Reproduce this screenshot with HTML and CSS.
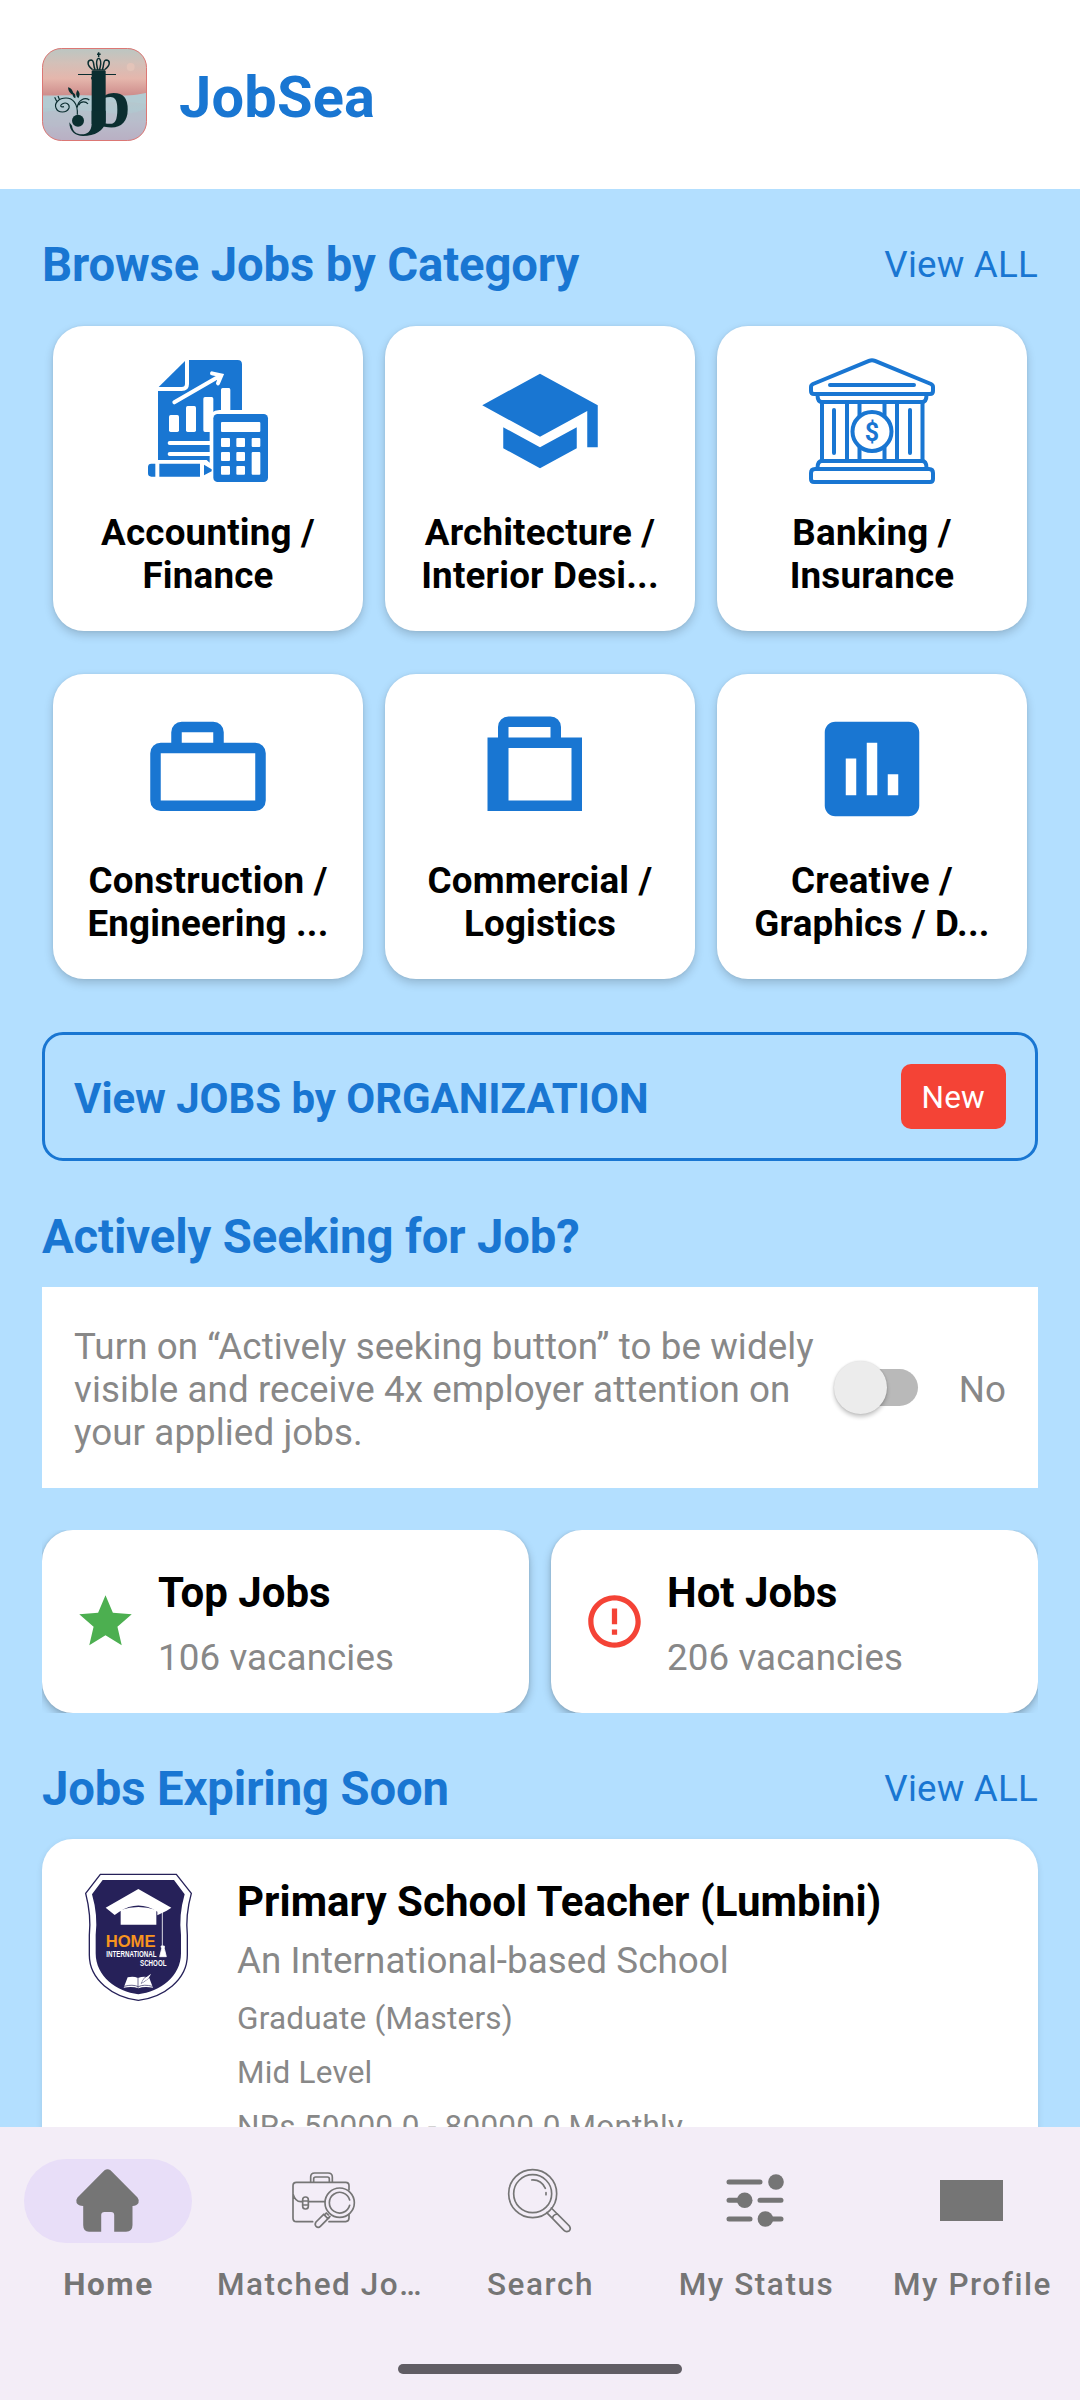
FILE: index.html
```html
<!DOCTYPE html>
<html lang="en">
<head>
<meta charset="utf-8">
<title>JobSea</title>
<link rel="stylesheet" href="styles.css">
</head>
<body>
<header class="header">
  <svg class="logo" viewBox="12 12 315 279">
    <defs>
      <linearGradient id="sky" x1="0" y1="0" x2="0" y2="1">
        <stop offset="0" stop-color="#bac6c2"/><stop offset=".16" stop-color="#d3c0b8"/>
        <stop offset=".33" stop-color="#e5b6ac"/><stop offset=".5" stop-color="#cf8f8d"/>
        <stop offset=".52" stop-color="#b9c6cb"/><stop offset=".66" stop-color="#b1c8d0"/>
        <stop offset=".8" stop-color="#b9bccb"/><stop offset="1" stop-color="#b9afc3"/>
      </linearGradient>
      <clipPath id="tile"><rect x="13" y="13" width="313" height="277" rx="58"/></clipPath>
    </defs>
    <g clip-path="url(#tile)">
      <rect x="12" y="12" width="315" height="279" fill="url(#sky)"/>
      <path d="M12 160Q90 150 170 156T327 146V180Q250 168 180 180T12 192z" fill="#b3cbd2"/>
      <path d="M12 205Q90 190 190 205T327 190V230Q220 220 120 240T12 230z" fill="#b8bcc9" opacity=".6"/>
      <circle cx="278" cy="69" r="12" fill="#e3c4b9"/>
    </g>
    <rect x="13.5" y="13.5" width="312" height="276" rx="57" fill="none" stroke="#dc7774" stroke-width="3"/>
    <rect class="ink" x="161" y="80" width="42" height="160"/>
    <path class="ink" d="M120 90h114v3H120z"/>
    <text class="monogram" transform="translate(157 250)" font-size="218">b</text>
    <path class="ink" d="M161 200V240C160 262 148 271 132 271C115 271 104 262 102 245L94 235C94 262 112 276 135 276C170 276 198 262 203 232V200z"/>
    <circle class="ink" cx="120" cy="230" r="18"/>
    <g class="ink-line">
      <path d="M163 78h38M163 76C145 62 148 48 160 48C170 49 165 66 171 76M201 76C219 62 216 48 204 48C194 49 199 66 193 76M182 42C170 50 177 66 179 76M182 42C194 50 187 66 185 76" stroke-width="4.500"/>
      <path d="M182 25v14M177 31h11" stroke-width="4.500"/>
      <path d="M118 212C120 178 104 162 84 162C62 162 48 178 54 192C60 208 86 208 93 192C96 180 84 174 74 179C64 184 68 191 78 188M118 190C120 168 140 158 154 168M122 184C128 170 144 172 150 180M56 172L50 160M64 166L60 156" stroke-width="3.500"/>
    </g>
    <path class="ink" d="M90 130Q104 132 107 153Q91 149 90 130zM118 138Q130 148 121 163Q110 154 118 138zM103 144Q115 150 112 163Q102 159 103 144z"/>
  </svg>
  <h1 class="brand">JobSea</h1>
</header>

<main class="content">
  <div class="section-head first">
    <h2>Browse Jobs by Category</h2>
    <a class="view-all">View ALL</a>
  </div>

  <section class="categories">
    <article class="category">
      <svg class="cat-icon" viewBox="315 144 378 378">
        <path d="M354 243H425Q447 243 447 222V150H593Q606 150 606 163V300H538Q509 300 509 330V458L500 450H354z"/>
        <path d="M435 153V222Q435 231 425 231H356z"/>
        <g fill="#fff">
          <rect x="387" y="315" width="30" height="51" rx="5"/><rect x="438" y="288" width="30" height="78" rx="5"/>
          <path d="M495 261h20q5 0 5 5V366H495q-5 0-5-5V266q0-5 5-5zM548 234h19q4 0 4 5V301H543V239q0-5 5-5z"/>
        </g>
        <path d="M403 277L538 199M516 190L544 196L534 220M389 399H512M389 432H512" fill="none" stroke="#fff" stroke-width="12" stroke-linecap="round"/>
        <path d="M346 461V500H334Q324 500 324 490V471Q324 461 334 461zM358 461H480V500H358zM492 464L515 478V484L492 496z"/>
        <rect x="520" y="312" width="164" height="204" rx="13"/>
        <g fill="#fff">
          <rect x="543" y="336" width="118" height="30" rx="3"/>
          <rect x="543" y="384" width="27" height="27" rx="3"/><rect x="589" y="384" width="26" height="27" rx="3"/><rect x="635" y="384" width="26" height="27" rx="3"/>
          <rect x="543" y="426" width="27" height="27" rx="3"/><rect x="589" y="426" width="26" height="27" rx="3"/><rect x="635" y="426" width="26" height="68" rx="3"/>
          <rect x="543" y="468" width="27" height="26" rx="3"/><rect x="589" y="468" width="26" height="26" rx="3"/>
        </g>
      </svg>
      <p>Accounting /<br>Finance</p>
    </article>
    <article class="category">
      <svg class="cat-icon" viewBox="0 0 24 24"><path d="M5 13.18v4L12 21l7-3.82v-4L12 17l-7-3.82zM12 3L1 9l11 6 9-4.91V17h2V9L12 3z"/></svg>
      <p>Architecture /<br>Interior Desi...</p>
    </article>
    <article class="category">
      <svg class="cat-icon" viewBox="0 0 126 126">
        <g fill="none" stroke="#1976d2" stroke-width="4" stroke-linejoin="round" stroke-linecap="round">
          <path d="M4 26L60 2.8Q63 1.5 66 2.8L122 26Q124 27 124 29V33Q124 36 121 36H5Q2 36 2 33V29Q2 27 4 26zM21 27H105"/>
          <path d="M8.5 37Q8.500 44 13 44H113Q117.500 44 117.500 37"/>
          <path d="M13 44V103M38 44V103M50.500 44V103M75.500 44V103M88 44V103M113.500 44V103M25 52V95M101 52V95"/>
          <path d="M8.500 110Q8.500 103 13 103H113Q117.500 103 117.500 110M6 111H120Q124 111 124 115V121Q124 124 121 124H5Q2 124 2 121V115Q2 111 6 111z"/>
          <circle cx="63" cy="73.500" r="19.500" fill="#fff"/>
        </g>
        <text class="coin" x="63" y="82.500">$</text>
      </svg>
      <p>Banking /<br>Insurance</p>
    </article>
    <article class="category">
      <svg class="cat-icon" viewBox="0 0 24 24"><path fill-rule="evenodd" d="M5 7V5a2 2 0 0 1 2-2h6a2 2 0 0 1 2 2v2h6a2 2 0 0 1 2 2v9a2 2 0 0 1-2 2H3a2 2 0 0 1-2-2V9a2 2 0 0 1 2-2zM7 7h6V5H7zM3 9v9h18V9z"/></svg>
      <p>Construction /<br>Engineering ...</p>
    </article>
    <article class="category">
      <svg class="cat-icon" viewBox="0 0 24 24"><path fill-rule="evenodd" d="M2 6h2V4a2 2 0 0 1 2-2h8a2 2 0 0 1 2 2v2h4v14H2zM6 6h8V4H6zM6 8v10h12V8z"/></svg>
      <p>Commercial /<br>Logistics</p>
    </article>
    <article class="category">
      <svg class="cat-icon" viewBox="0 0 24 24"><path d="M19 3H5c-1.100 0-2 .9-2 2v14c0 1.100.9 2 2 2h14c1.100 0 2-.9 2-2V5c0-1.100-.9-2-2-2zM9 17H7v-7h2v7zm4 0h-2V7h2v10zm4 0h-2v-4h2v4z"/></svg>
      <p>Creative /<br>Graphics / D...</p>
    </article>
  </section>

  <section class="organization">
    <strong>View JOBS by ORGANIZATION</strong>
    <span class="badge">New</span>
  </section>

  <div class="section-head seeking-head"><h2>Actively Seeking for Job?</h2></div>
  <section class="seeking">
    <p>Turn on “Actively seeking button” to be widely<br>visible and receive 4x employer attention on<br>your applied jobs.</p>
    <span class="switch"><span class="thumb"></span></span>
    <span class="state">No</span>
  </section>

  <section class="stats">
    <article class="stat">
      <svg viewBox="0 0 24 24" fill="#4caf50"><path d="M12 17.270L18.180 21l-1.640-7.030L22 9.240l-7.190-.61L12 2 9.190 8.630 2 9.240l5.460 4.730L5.820 21z"/></svg>
      <div><h3>Top Jobs</h3><p>106 vacancies</p></div>
    </article>
    <article class="stat">
      <svg viewBox="0 0 24 24" fill="#f44336"><path d="M11 15h2v2h-2zm0-8h2v6h-2zm.99-5C6.470 2 2 6.480 2 12s4.470 10 9.990 10C17.520 22 22 17.520 22 12S17.520 2 11.990 2zM12 20c-4.420 0-8-3.580-8-8s3.580-8 8-8 8 3.580 8 8-3.580 8-8 8z"/></svg>
      <div><h3>Hot Jobs</h3><p>206 vacancies</p></div>
    </article>
  </section>

  <div class="section-head expiring-head">
    <h2>Jobs Expiring Soon</h2>
    <a class="view-all">View ALL</a>
  </div>
  <article class="job">
    <svg class="school" viewBox="42 39 327 387">
      <path d="M91 43H319L364 100Q346 165 352 225V285C352 360 280 412 205 421C130 412 58 360 58 285V225Q64 165 47 100z" fill="#fff" stroke="#262159" stroke-width="4"/>
      <path d="M98 60H312L344 103Q326 165 333 225V280C333 350 270 395 205 403C140 395 77 350 77 280V225Q84 165 66 103z" fill="#262159"/>
      <path d="M205 87L304 143L290 152L262 166V155Q205 118 148 155L134 165L107 143z" fill="#fff"/>
      <path d="M152 150Q205 132 259 150V194H152z" fill="#fff"/>
      <path d="M277 150V258M273 258h10v8l6 24H269l6-24z" fill="#fff" stroke="#fff" stroke-width="2.500"/>
      <text class="school-home" transform="translate(107 260) scale(.96 1)">HOME</text>
      <text class="school-name" transform="translate(109 290) scale(.69 1)">INTERNATIONAL</text>
      <text class="school-name" transform="translate(210 318) scale(.69 1)">SCHOOL</text>
      <path d="M173 352Q190 347 204 354Q220 347 237 352L249 383Q222 378 205 385Q188 378 161 383z" fill="#fff"/>
      <path d="M204 354V384M214 370L222 355L243 341Q238 357 225 363zM162 379Q188 372 205 380Q222 372 248 379" stroke="#262159" stroke-width="2" fill="none"/>
      <path d="M214 370L222 357L243 341Q238 355 225 362z" fill="#fff"/>
    </svg>
    <div class="job-text">
      <h3>Primary School Teacher (Lumbini)</h3>
      <p class="company">An International-based School</p>
      <p class="detail">Graduate (Masters)</p>
      <p class="detail">Mid Level</p>
      <p class="detail">NRs 50000.0 - 80000.0 Monthly</p>
    </div>
  </article>
</main>

<nav class="nav">
  <div class="tabs">
    <div class="tab active">
      <span class="pill"><svg viewBox="0 0 63 63" fill="#757575"><path d="M28.500 1.300Q31.500-1 34.500 1.300L61.500 28.500Q63.500 31 62.500 34Q60.500 37 56.500 37V56Q56.500 62.700 50 62.700H38.200V46Q38.200 43 35 43H28.500Q25.200 43 25.200 46V62.700H13Q7.200 62.700 7.200 56V37Q2.500 37 .6 34Q-.5 31 1.500 28.500z"/></svg></span>
      <span class="label">Home</span>
    </div>
    <div class="tab">
      <span class="pill"><svg viewBox="36 58 189 189" class="outline">
        <path d="M92 98V82Q92 70 104 70H144Q157 70 157 82V98M101 98V88Q101 82 107 82H142Q148 82 148 88V98M207 121V108Q207 98 197 98H49Q39 98 39 108V205Q39 216 49 216H98M147 216H197Q207 215 207 205V195M39 133Q46 156 62 156H67M86 156H134"/>
        <rect x="68" y="142" width="17" height="36" rx="8"/><path d="M68 154H85M68 166H85"/>
        <circle cx="179" cy="159" r="44"/><path d="M209 151A31 31 0 1 0 209 167"/>
        <path d="M139 190L145 196M150 200L146 206M134 196L142 206M131 194L108 217Q103 224 108 230Q115 236 121 230L144 207zM139 190L134 195M149 201L144 206"/>
      </svg></span>
      <span class="label clipped">Matched Jo…</span>
    </div>
    <div class="tab">
      <span class="pill"><svg viewBox="684 57 189 189" class="outline">
        <circle cx="758" cy="131" r="72"/><circle cx="758" cy="131" r="57"/>
        <path d="M755 90Q783 88 796 115M798 128V134M800 188L818 206M814 174L832 192M818 206Q817 195 832 192L868 228Q874 237 867 243Q858 247 852 241z"/>
      </svg></span>
      <span class="label">Search</span>
    </div>
    <div class="tab">
      <span class="pill"><svg viewBox="0 0 63 63" fill="#757575"><path d="M5 13H36M5 31.300H20M36 31.300H57M5 50H26M42 50H57" stroke="#757575" stroke-width="5" stroke-linecap="round"/><circle cx="52" cy="13" r="7.800"/><circle cx="20.700" cy="31.300" r="7.800"/><circle cx="41.400" cy="50" r="7.800"/></svg></span>
      <span class="label">My Status</span>
    </div>
    <div class="tab">
      <span class="pill"><svg viewBox="0 0 63 63" fill="#757575"><path d="M0 11H63V52H0z"/></svg></span>
      <span class="label">My Profile</span>
    </div>
  </div>
  <span class="handle"></span>
</nav>
</body>
</html>
```
FILE: styles.css
```css
* { box-sizing: border-box; margin: 0; padding: 0; }

body {
  width: 1080px;
  height: 2400px;
  overflow: hidden;
  display: flex;
  flex-direction: column;
  background: #b3dfff;
  font-family: Roboto, sans-serif;
  color: #000;
}

svg { display: block; flex: none; }

.header {
  height: 189px;
  flex: none;
  display: flex;
  align-items: center;
  gap: 32px;
  padding: 0 42px;
  background: #fff;
}
.logo { width: 105px; height: 93px; overflow: visible; }
.ink { fill: #0b2e30; }
.ink-line { fill: none; stroke: #0b2e30; }
.monogram { fill: #0b2e30; font-family: "Liberation Serif", serif; font-weight: 700; }
.brand { font-size: 57.75px; line-height: 68px; letter-spacing: .2px; color: #1976d2; padding-top: 4px; }

.content {
  flex: 1;
  min-height: 0;
  overflow: hidden;
  padding: 48px 42px 0;
}

.section-head {
  height: 55px;
  display: flex;
  align-items: center;
  justify-content: space-between;
  color: #1976d2;
}
.section-head h2 { padding-top: 2px; font-size: 47.25px; line-height: 55px; letter-spacing: -.13px; }
.view-all { font-size: 36.75px; line-height: 43px; letter-spacing: .2px; }

.categories {
  display: grid;
  grid-template-columns: repeat(3, 310px);
  justify-content: center;
  gap: 43px 22px;
  margin-top: 34px;
}
.category {
  height: 305px;
  padding-top: 32px;
  display: flex;
  flex-direction: column;
  align-items: center;
  background: #fff;
  border-radius: 31px;
  box-shadow: 0 4px 10px rgba(0, 0, 0, .18), 0 0 3px rgba(0, 0, 0, .06);
}
.cat-icon { width: 126px; height: 126px; fill: #1976d2; }
.coin { font-size: 25px; font-weight: 700; text-anchor: middle; }
.category p {
  margin-top: 27px;
  font-size: 36.75px;
  line-height: 43px;
  font-weight: 700;
  letter-spacing: .2px;
  text-align: center;
  white-space: nowrap;
}

.organization {
  height: 129px;
  margin-top: 53px;
  padding: 0 29px;
  display: flex;
  align-items: center;
  justify-content: space-between;
  border: 3px solid #1976d2;
  border-radius: 21px;
  color: #1976d2;
  font-size: 42px;
  line-height: 49px;
}
.organization strong { padding-top: 3px; letter-spacing: -.06px; }
.badge {
  height: 65px;
  padding: 0 21px;
  border-radius: 10px;
  background: #f44336;
  color: #fff;
  font-size: 31.5px;
  letter-spacing: .2px;
  line-height: 68px;
}

.seeking-head { margin-top: 48px; }
.seeking {
  height: 201px;
  margin-top: 23px;
  padding: 0 32px;
  display: flex;
  align-items: center;
  background: #fff;
  color: #888;
  font-size: 36.75px;
  line-height: 43px;
  white-space: nowrap;
}
.seeking p { padding-top: 4px; letter-spacing: .08px; }
.switch {
  width: 78px;
  height: 37px;
  margin-left: auto;
  display: flex;
  align-items: center;
  border-radius: 19px;
  background: #b9b9b9;
}
.thumb {
  width: 53px;
  height: 53px;
  flex: none;
  margin-left: -6px;
  border-radius: 50%;
  background: #ececec;
  box-shadow: 0 3px 4px rgba(0, 0, 0, .22), 0 0 2px rgba(0, 0, 0, .15);
}
.state { margin-left: 41px; padding-top: 3px; }

.stats {
  display: grid;
  grid-template-columns: 1fr 1fr;
  gap: 22px;
  height: 183px;
  margin-top: 42px;
  overflow: hidden;
}
.stat {
  display: flex;
  align-items: center;
  gap: 21px;
  padding-left: 32px;
  background: #fff;
  border-radius: 31px;
  box-shadow: 0 4px 8px rgba(0, 0, 0, .25), 0 0 3px rgba(0, 0, 0, .1);
}
.stat svg { width: 63px; height: 63px; }
.stat div { padding-top: 3px; }
h3 { font-size: 42px; line-height: 49px; }
.stat p {
  margin-top: 19px;
  font-size: 36.75px;
  line-height: 43px;
  letter-spacing: .1px;
  color: #888;
}

.expiring-head { margin-top: 48px; }
.job {
  height: 420px;
  margin-top: 23px;
  padding: 34px 42px 0;
  display: flex;
  gap: 44px;
  background: #fff;
  border-radius: 31px;
  box-shadow: 0 2px 6px rgba(0, 0, 0, .1);
}
.school { width: 109px; height: 129px; }
.school-home { font: 700 52px "Liberation Sans", sans-serif; fill: #f7941e; }
.school-name { font: 700 27px "Liberation Sans", sans-serif; fill: #fff; }
.job-text { padding-top: 4px; white-space: nowrap; }
.job h3 { letter-spacing: .04px; }
.company { margin-top: 13px; font-size: 36.75px; line-height: 43px; letter-spacing: .05px; color: #888; }
.detail { margin-top: 17px; font-size: 31.5px; line-height: 37px; letter-spacing: .2px; color: #888; }
.company + .detail { margin-top: 18px; }

.nav {
  height: 273px;
  flex: none;
  display: flex;
  flex-direction: column;
  align-items: center;
  background: #f3edf7;
}
.tabs { display: flex; height: 237px; padding-top: 32px; }
.tab {
  width: 216px;
  display: flex;
  flex-direction: column;
  align-items: center;
  gap: 23px;
}
.pill {
  width: 168px;
  height: 84px;
  flex: none;
  display: flex;
  align-items: center;
  justify-content: center;
  border-radius: 42px;
}
.active .pill { background: #e8def8; }
.pill svg { width: 63px; height: 63px; overflow: visible; margin: -1px 1px 0 0; }
.outline { fill: none; stroke: #757575; stroke-width: 5; stroke-linecap: round; }
.label {
  font-size: 31.5px;
  line-height: 37px;
  font-weight: 500;
  letter-spacing: 1.55px;
  color: #757575;
  white-space: nowrap;
  padding-left: 1px;
}
.active .label { font-weight: 700; }
.clipped { margin-right: 9px; }
.handle { width: 284px; height: 10px; border-radius: 5px; background: #605d64; }
```
